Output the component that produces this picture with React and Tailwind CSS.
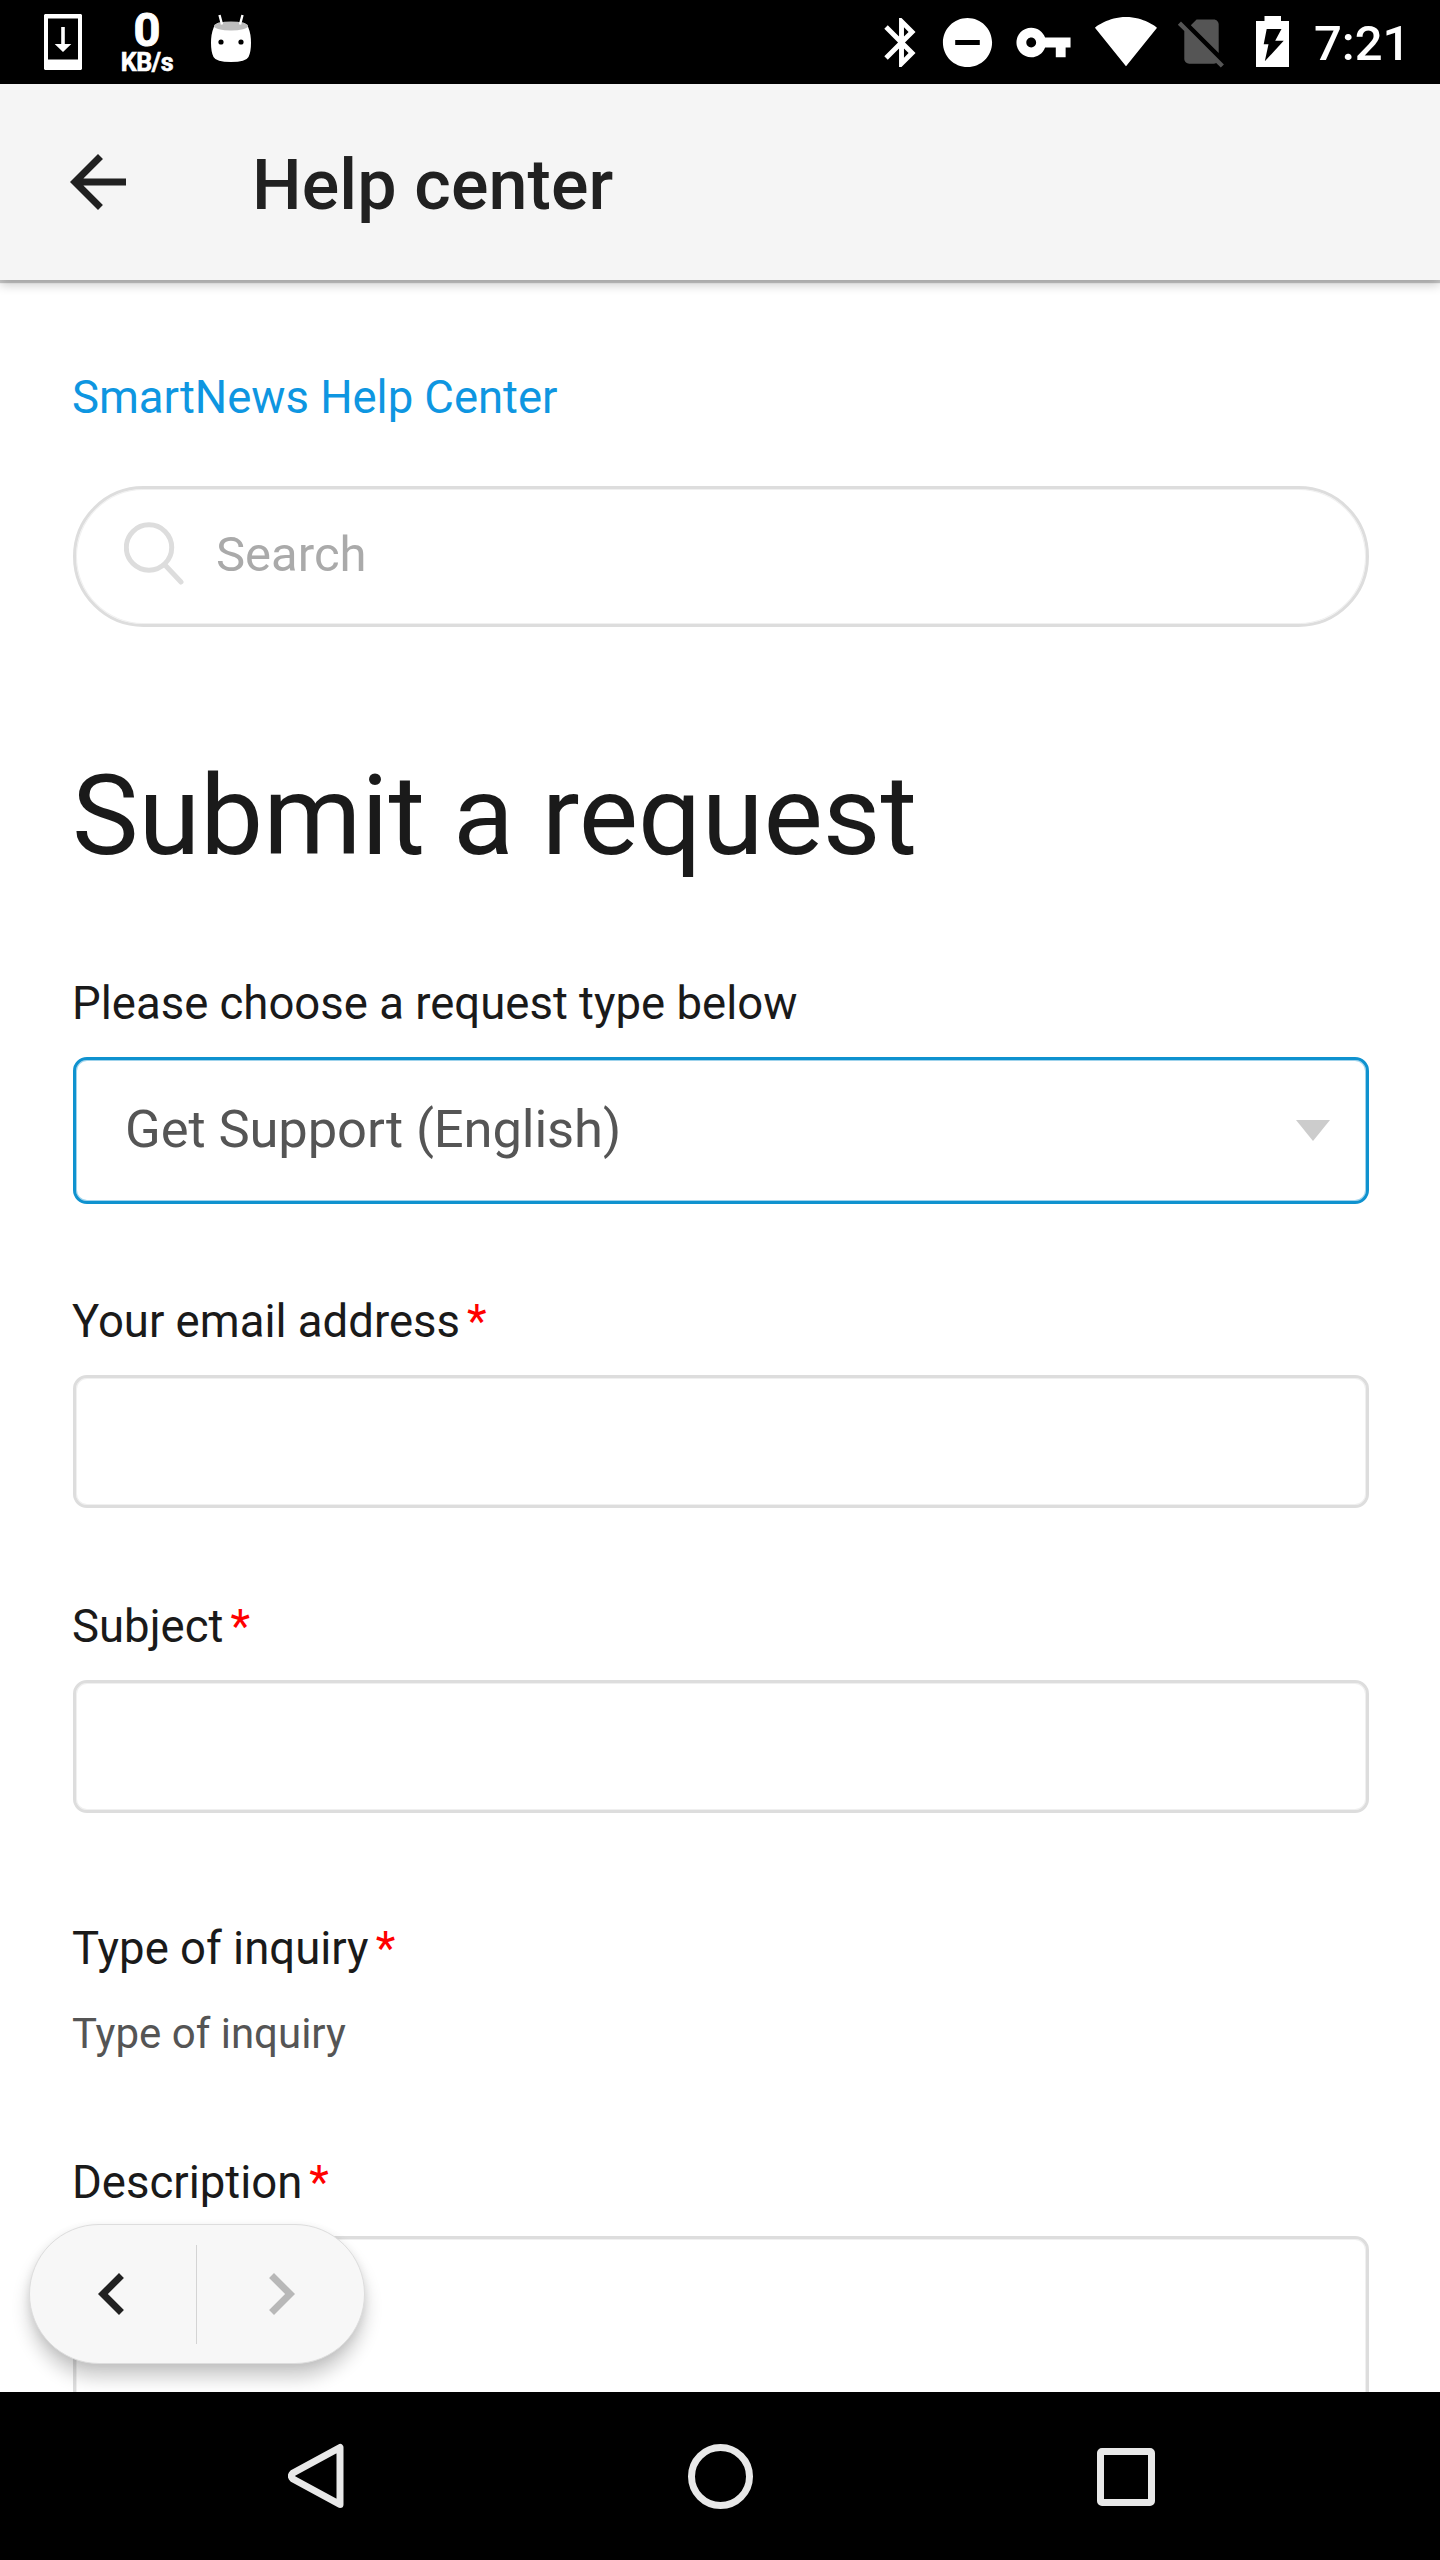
const ICONS = {
  bluetooth:
    "M17.71 7.71L12 2h-1v7.59L6.41 5 5 6.41 10.59 12 5 17.59 6.41 19 11 14.41V22h1l5.71-5.71-4.3-4.29 4.3-4.29zM13 5.83l1.88 1.88L13 9.59V5.83zm1.88 10.46L13 18.17v-3.76l1.88 1.88z",
  dnd: "M12 2C6.48 2 2 6.48 2 12s4.48 10 10 10 10-4.48 10-10S17.52 2 12 2zm5 11H7v-2h10v2z",
  key: "M12.65 10C11.83 7.67 9.61 6 7 6c-3.31 0-6 2.69-6 6s2.69 6 6 6c2.61 0 4.83-1.67 5.65-4H17v4h4v-4h2v-4H12.65zM7 14c-1.1 0-2-.9-2-2s.9-2 2-2 2 .9 2 2-.9 2-2 2z",
  wifi: "M12.01 21.49L23.64 7c-.45-.34-4.93-4-11.64-4C5.28 3 .81 6.66.36 7l11.63 14.49.01.01.01-.01z",
  noSim:
    "M18.99 5c0-1.1-.89-2-1.99-2h-7L7.66 5.34 19 16.68 18.99 5zM3.65 3.88L2.38 5.15 5 7.77V19c0 1.1.9 2 2 2h10.01c.35 0 .67-.1.96-.26l1.88 1.88 1.27-1.27L3.65 3.88z",
  back: "M20 11H7.83l5.59-5.59L12 4l-8 8 8 8 1.41-1.41L7.83 13H20v-2z",
  left: "M15.41 7.41L14 6l-6 6 6 6 1.41-1.41L10.83 12z",
  right: "M10 6L8.59 7.41 13.17 12l-4.58 4.59L10 18l6-6z",
};

function Icon({ name, className }) {
  return (
    <svg viewBox="0 0 24 24" fill="currentColor" className={`shrink-0 ${className}`}>
      <path d={ICONS[name]} />
    </svg>
  );
}

function StatusBar() {
  return (
    <div className="flex h-[84px] items-start bg-black text-white">
      <svg viewBox="0 0 38 56" className="mt-[14px] ml-[44px] h-[56px] w-[38px] shrink-0" fill="currentColor">
        <path fillRule="evenodd" d="M1 0h36l1 1v54l-1 1H1l-1-1V1zM4 4.500v41h30V4.500z" />
        <path d="M17.200 13h3.600v17h6.500L19 38l-8.300-8h6.500z" />
      </svg>
      <div className="ml-[35px] flex w-[60px] flex-col items-center font-bold">
        <span className="mt-[6px] h-[47px] text-[47px] leading-[47px] [-webkit-text-stroke:1px_white]">0</span>
        <span className="h-[20px] text-[25px] leading-[20px] tracking-[-0.4px] [-webkit-text-stroke:0.6px_white]">KB/s</span>
      </div>
      <svg viewBox="0 0 40 48" className="mt-[14px] ml-[34px] h-[48px] w-[40px] shrink-0">
        <path
          d="M2.500 14Q4 8.500 10 8.500h20q6 0 7.500 5.500Q40 20 40 29t-2.500 14Q35 48 20 48T2.500 43Q0 38 0 29t2.500-15z"
          fill="#fff"
        />
        <ellipse cx="20" cy="12" rx="17" ry="4.600" fill="#bdbdbd" />
        <path d="M8.500 1L11 10.500M31.500 1L29 10.500" stroke="#fff" strokeWidth="2.400" />
        <circle cx="10" cy="28" r="2.600" />
        <circle cx="30" cy="28" r="2.600" />
      </svg>
      <div className="ml-auto flex items-start">
        <Icon name="bluetooth" className="mt-[13px] h-[59px] w-[59px]" />
        <Icon name="dnd" className="mt-[13px] ml-[7px] h-[59px] w-[59px]" />
        <Icon name="key" className="mt-[12.500px] ml-[17px] h-[59px] w-[59px]" />
        <Icon name="wifi" className="mt-[9px] ml-[21px] h-[64px] w-[64px]" />
        <Icon name="noSim" className="mt-[12px] ml-[14px] h-[59px] w-[59px] text-[#555]" />
        <svg viewBox="0 0 33 51" className="mt-[16px] ml-[25px] h-[51px] w-[33px] shrink-0" fill="currentColor">
          <path
            fillRule="evenodd"
            d="M8.500 0h16.500v5h8v46H0V5h8.500zM10.700 13L7.700 28.300h4.800L8.800 45.300 27.700 24.700h-8.500L25.500 13z"
          />
        </svg>
        <span className="mt-[14px] mr-[35px] ml-[25px] w-[91px] text-[49px] leading-[60px] font-medium whitespace-nowrap">
          7:21
        </span>
      </div>
    </div>
  );
}

function AppBar() {
  return (
    <header className="relative z-10 flex h-[196px] items-center bg-[#f5f5f5] text-[#212121] shadow-[0_3px_1px_rgba(0,0,0,0.2),0_5px_10px_rgba(0,0,0,0.2)]">
      <Icon name="back" className="ml-[56px] h-[84px] w-[84px]" />
      <h1 className="mt-[6px] ml-[112px] text-[70px] leading-[84px] font-medium tracking-[0.1px]">Help center</h1>
    </header>
  );
}

function Label({ children, required, className }) {
  return (
    <div className={`-ml-px flex h-[60px] text-[45.500px] leading-[60px] whitespace-nowrap text-[#1a1a1a] ${className}`}>
      {children}
      {required && <span className="ml-[7px] text-[#f00]">*</span>}
    </div>
  );
}

function TextField({ className }) {
  return (
    <div
      className={`mt-[23px] shrink-0 rounded-[14px] border-[3px] border-[#ddd] shadow-[inset_0_0_0_1px_#f0f0f0] ${className}`}
    />
  );
}

function RequestForm() {
  return (
    <main className="relative flex h-[2112px] flex-col overflow-hidden bg-white pr-[71px] pl-[73px]">
      <a className="mt-[88px] -ml-px h-[60px] text-[45.500px] leading-[60px] tracking-[-0.05px] text-[#0e96e1]">
        SmartNews Help Center
      </a>
      <div className="mt-[58px] flex h-[141px] shrink-0 items-start rounded-full border-[3px] border-[#ddd] shadow-[inset_0_0_0_1px_#f0f0f0]">
        <svg viewBox="0 0 60 64" className="mt-[33px] ml-[48px] h-[64px] w-[60px] shrink-0" fill="none" stroke="#ddd" strokeWidth="5" strokeLinecap="round">
          <circle cx="25" cy="25.500" r="22.700" />
          <path d="M41 43L57 60" />
        </svg>
        <span className="mt-[36px] ml-[32px] text-[49px] leading-[60px] text-[#aaa]">Search</span>
      </div>
      <h2 className="mt-[119px] -ml-px h-[140px] shrink-0 text-[112px] leading-[140px] text-[#1a1a1a]">Submit a request</h2>

      <Label className="mt-[88px]">Please choose a request type below</Label>
      <div className="mt-[23px] flex h-[147px] shrink-0 items-center justify-between rounded-[14px] border-[3px] border-[#0f92cf] pr-[36px] pl-[49px] shadow-[inset_0_0_0_1px_#9fd3ec]">
        <span className="-mt-[3px] text-[52.500px] leading-[60px] tracking-[-0.1px] text-[#555]">Get Support (English)</span>
        <svg viewBox="0 0 34 21" className="h-[21px] w-[34px]" fill="#ccc">
          <path d="M0 0h34L17 21z" />
        </svg>
      </div>

      <Label required className="mt-[88px]">Your email address</Label>
      <TextField className="h-[133px]" />

      <Label required className="mt-[89px]">Subject</Label>
      <TextField className="h-[133px]" />

      <Label required className="mt-[106px]">Type of inquiry</Label>
      <p className="mt-[25px] -ml-px h-[60px] text-[42px] leading-[60px] text-[#555]">Type of inquiry</p>

      <Label required className="mt-[89px]">Description</Label>
      <TextField className="h-[350px]" />

      <div className="absolute bottom-[28px] left-[29px] flex h-[140px] w-[336px] items-center rounded-full border border-[#ddd] bg-[#f7f7f7] shadow-[0_14px_18px_rgba(0,0,0,0.2),0_2px_8px_rgba(0,0,0,0.08)]">
        <Icon name="left" className="ml-[40px] h-[84px] w-[84px] text-[#212121]" />
        <div className="ml-[42px] h-[99px] w-px bg-[#d4d4d4]" />
        <Icon name="right" className="ml-[42px] h-[84px] w-[84px] text-[#b8b8b8]" />
      </div>
    </main>
  );
}

function NavBar() {
  return (
    <nav className="flex h-[168px] items-center bg-black">
      <svg viewBox="0 0 56 66" className="ml-[288px] h-[66px] w-[56px]" fill="none" stroke="#e8e8e8" strokeWidth="7" strokeLinejoin="round">
        <path d="M52 4.500v57L5 36q-3-3 0-6z" />
      </svg>
      <div className="mt-px ml-[344px] h-[65px] w-[65px] rounded-full border-[7px] border-[#e8e8e8]" />
      <div className="mt-px ml-[344px] h-[58px] w-[58px] rounded-[5px] border-[7px] border-[#e8e8e8]" />
    </nav>
  );
}

export default function App() {
  return (
    <div className="flex h-[2560px] w-[1440px] flex-col overflow-hidden font-['Roboto',sans-serif]">
      <StatusBar />
      <AppBar />
      <RequestForm />
      <NavBar />
    </div>
  );
}
